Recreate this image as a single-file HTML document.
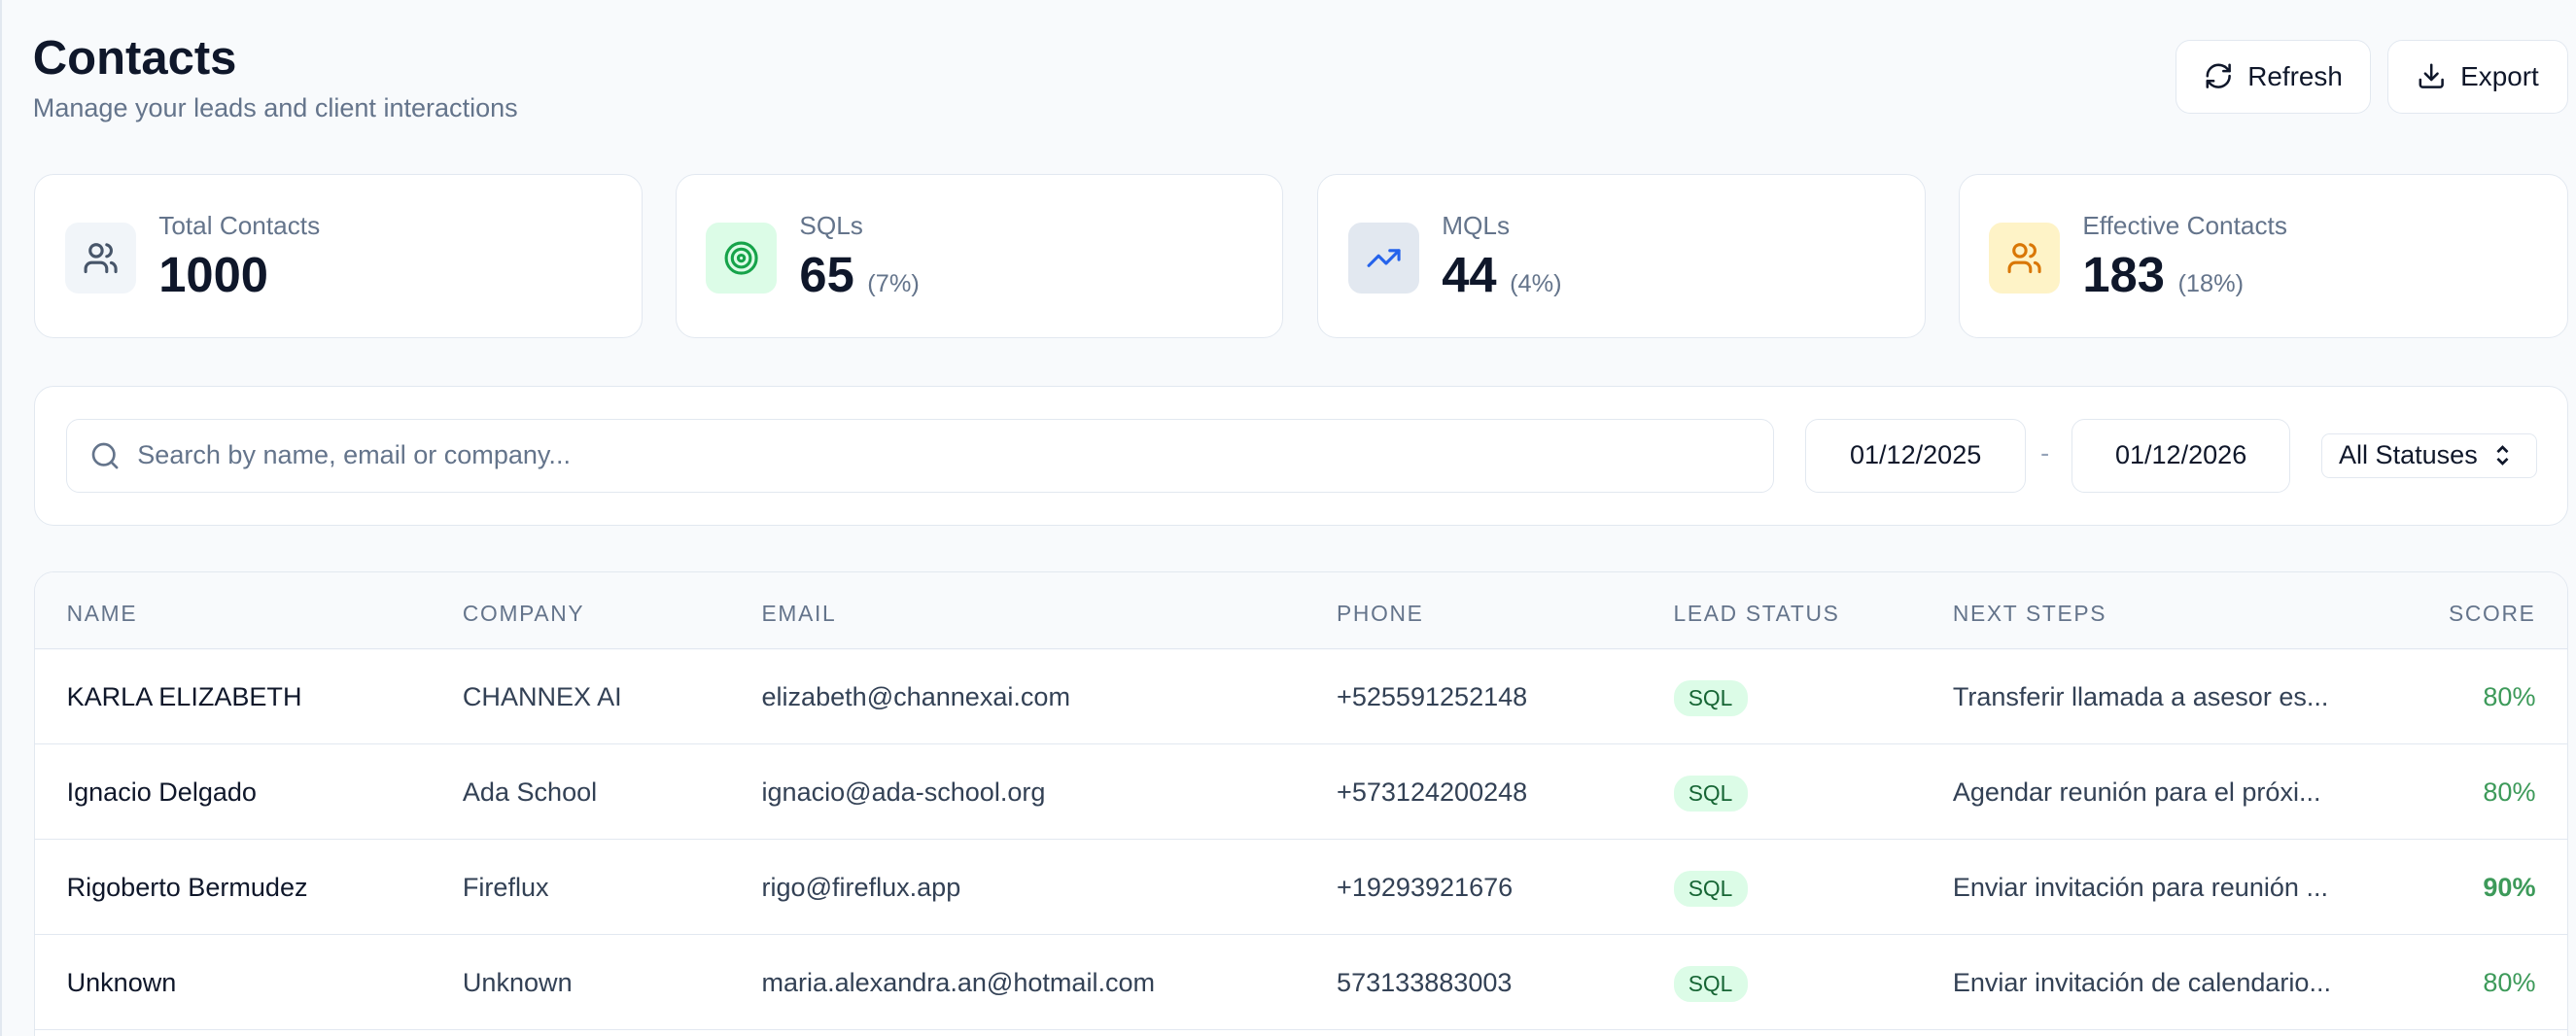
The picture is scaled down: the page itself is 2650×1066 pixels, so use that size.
<!DOCTYPE html>
<html><head><meta charset="utf-8"><style>
html,body{margin:0;padding:0;}
body{width:2650px;height:1066px;overflow:hidden;background:#f8fafc;font-family:"Liberation Sans",sans-serif;}
#z{zoom:1.6901;width:1568px;height:631px;position:relative;overflow:hidden;}
#z:before{content:"";position:absolute;left:0;top:0;width:1px;height:100%;background:#e2e8f0;}
.a{position:absolute;}
.card{position:absolute;background:#fff;border:1px solid #e2e8f0;border-radius:12px;box-sizing:border-box;}
.btn{position:absolute;background:#fff;border:1px solid #e2e8f0;border-radius:9px;box-sizing:border-box;font-size:16.5px;color:#0f172a;display:flex;align-items:center;justify-content:center;gap:9px;}
.ic{position:absolute;left:18px;top:29px;width:43px;height:43px;border-radius:8px;display:flex;align-items:center;justify-content:center;}
.lbl{position:absolute;left:75px;top:22px;font-size:15.5px;color:#64748b;}
.val{position:absolute;left:75px;top:43px;font-size:30px;font-weight:bold;color:#0f172a;}
.val span{font-size:15px;font-weight:normal;color:#64748b;margin-left:8px;}
.inp{position:absolute;border:1px solid #e2e8f0;border-radius:8px;box-sizing:border-box;background:#fff;font-size:16px;color:#0f172a;display:flex;align-items:center;}
.th{position:absolute;top:17px;font-size:13.5px;letter-spacing:1px;color:#64748b;}
.row{position:absolute;left:0;width:100%;height:58px;border-top:1px solid #e2e8f0;font-size:16px;color:#334155;}
.row div{position:absolute;top:20px;}
.row .n{color:#0f172a;}
.badge{background:#dcfce7;color:#166534;font-size:13.5px;border-radius:10px;padding:3px 9px;top:19px!important;}
.sc{right:19px;color:#3d9a5a;}
</style></head><body><div id="z">
<div class="a" style="left:20px;top:19px;font-size:29px;font-weight:bold;color:#0f172a;">Contacts</div>
<div class="a" style="left:20px;top:57px;font-size:16px;color:#64748b;">Manage your leads and client interactions</div>
<div class="btn" style="left:1324px;top:24px;width:119px;height:45px;"><svg width="18" height="18" viewBox="0 0 24 24" fill="none" stroke="#0f172a" stroke-width="2" stroke-linecap="round" stroke-linejoin="round"><path d="M3 12a9 9 0 0 1 9-9 9.75 9.75 0 0 1 6.74 2.74L21 8"/><path d="M21 3v5h-5"/><path d="M21 12a9 9 0 0 1-9 9 9.75 9.75 0 0 1-6.74-2.74L3 16"/><path d="M8 16H3v5"/></svg>Refresh</div>
<div class="btn" style="left:1453px;top:24px;width:110px;height:45px;"><svg width="18" height="18" viewBox="0 0 24 24" fill="none" stroke="#0f172a" stroke-width="2" stroke-linecap="round" stroke-linejoin="round"><path d="M21 15v4a2 2 0 0 1-2 2H5a2 2 0 0 1-2-2v-4"/><path d="M7 10l5 5 5-5"/><path d="M12 15V3"/></svg>Export</div>

<div class="card" style="left:21px;top:106px;width:370px;height:100px;"><div class="ic" style="background:#f1f5f9"><svg width="22" height="22" viewBox="0 0 24 24" fill="none" stroke="#475569" stroke-width="2" stroke-linecap="round"><path d="M16 21v-2a4 4 0 0 0-4-4H6a4 4 0 0 0-4 4v2"/><circle cx="9" cy="7" r="4"/><path d="M22 21v-2a4 4 0 0 0-3-3.87"/><path d="M16 3.13a4 4 0 0 1 0 7.75"/></svg></div><div class="lbl">Total Contacts</div><div class="val">1000</div></div>
<div class="card" style="left:411px;top:106px;width:370px;height:100px;"><div class="ic" style="background:#dcfce7"><svg width="22" height="22" viewBox="0 0 24 24" fill="none" stroke="#16a34a" stroke-width="2"><circle cx="12" cy="12" r="10"/><circle cx="12" cy="12" r="6"/><circle cx="12" cy="12" r="2"/></svg></div><div class="lbl">SQLs</div><div class="val">65<span>(7%)</span></div></div>
<div class="card" style="left:802px;top:106px;width:370px;height:100px;"><div class="ic" style="background:#e2e8f0"><svg width="22" height="22" viewBox="0 0 24 24" fill="none" stroke="#2563eb" stroke-width="2" stroke-linecap="round" stroke-linejoin="round"><path d="M22 7l-8.5 8.5-5-5L2 17"/><path d="M16 7h6v6"/></svg></div><div class="lbl">MQLs</div><div class="val">44<span>(4%)</span></div></div>
<div class="card" style="left:1192px;top:106px;width:371px;height:100px;"><div class="ic" style="background:#fef3c7"><svg width="22" height="22" viewBox="0 0 24 24" fill="none" stroke="#d97706" stroke-width="2" stroke-linecap="round"><path d="M16 21v-2a4 4 0 0 0-4-4H6a4 4 0 0 0-4 4v2"/><circle cx="9" cy="7" r="4"/><path d="M22 21v-2a4 4 0 0 0-3-3.87"/><path d="M16 3.13a4 4 0 0 1 0 7.75"/></svg></div><div class="lbl">Effective Contacts</div><div class="val">183<span>(18%)</span></div></div>

<div class="card" style="left:21px;top:235px;width:1542px;height:85px;"></div>
<div class="inp" style="left:40px;top:255px;width:1040px;height:45px;color:#64748b;"><svg style="margin:0 10px 0 14px" width="19" height="19" viewBox="0 0 24 24" fill="none" stroke="#64748b" stroke-width="2" stroke-linecap="round"><circle cx="11" cy="11" r="8"/><path d="M21 21l-4.3-4.3"/></svg>Search by name, email or company...</div>
<div class="inp" style="left:1099px;top:255px;width:134px;height:45px;justify-content:center;">01/12/2025</div>
<div class="a" style="left:1242px;top:267px;color:#94a3b8;font-size:16px;">-</div>
<div class="inp" style="left:1261px;top:255px;width:133px;height:45px;justify-content:center;">01/12/2026</div>
<div class="inp" style="left:1413px;top:264px;width:131px;height:27px;border-radius:5px;padding-left:10px;">All Statuses<svg style="margin-left:10px" width="10" height="16" viewBox="0 0 10 16" fill="none" stroke="#0f172a" stroke-width="1.6"><path d="M2 6l3-3 3 3M2 10l3 3 3-3"/></svg></div>

<div class="card" style="left:21px;top:348px;width:1542px;height:300px;overflow:hidden;">
<div class="a" style="left:0;top:0;width:100%;height:47px;background:#f8fafc;"></div>
<div class="th" style="left:19px">NAME</div><div class="th" style="left:260px">COMPANY</div><div class="th" style="left:442px">EMAIL</div><div class="th" style="left:792px">PHONE</div><div class="th" style="left:997px">LEAD STATUS</div><div class="th" style="left:1167px">NEXT STEPS</div><div class="th" style="right:19px">SCORE</div>
<div class="row" style="top:46px"><div class="n" style="left:19px">KARLA ELIZABETH</div><div style="left:260px">CHANNEX AI</div><div style="left:442px">elizabeth@channexai.com</div><div style="left:792px">+525591252148</div><div class="badge" style="left:997px">SQL</div><div style="left:1167px">Transferir llamada a asesor es...</div><div class="sc">80%</div></div>
<div class="row" style="top:104px"><div class="n" style="left:19px">Ignacio Delgado</div><div style="left:260px">Ada School</div><div style="left:442px">ignacio@ada-school.org</div><div style="left:792px">+573124200248</div><div class="badge" style="left:997px">SQL</div><div style="left:1167px">Agendar reunión para el próxi...</div><div class="sc">80%</div></div>
<div class="row" style="top:162px"><div class="n" style="left:19px">Rigoberto Bermudez</div><div style="left:260px">Fireflux</div><div style="left:442px">rigo@fireflux.app</div><div style="left:792px">+19293921676</div><div class="badge" style="left:997px">SQL</div><div style="left:1167px">Enviar invitación para reunión ...</div><div class="sc" style="font-weight:bold">90%</div></div>
<div class="row" style="top:220px"><div class="n" style="left:19px">Unknown</div><div style="left:260px">Unknown</div><div style="left:442px">maria.alexandra.an@hotmail.com</div><div style="left:792px">573133883003</div><div class="badge" style="left:997px">SQL</div><div style="left:1167px">Enviar invitación de calendario...</div><div class="sc">80%</div></div>
<div class="row" style="top:278px"></div>
</div>
</div></body></html>
